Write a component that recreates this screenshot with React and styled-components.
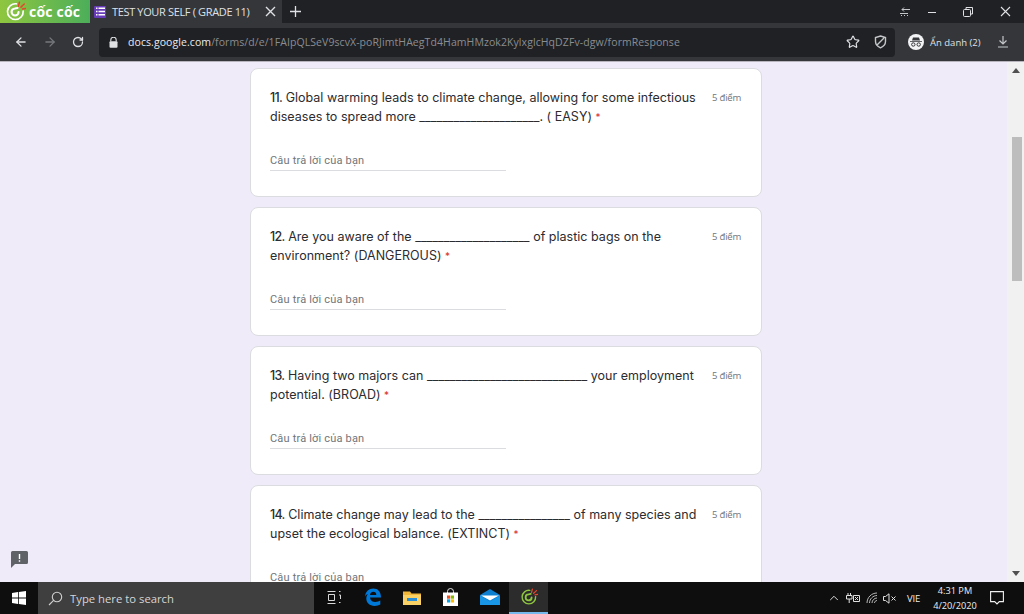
import React from 'react';
import styled, { createGlobalStyle } from 'styled-components';
import { ArrowLeft, ArrowRight, RotateCw, Star, ChevronUp } from 'lucide-react';

const GlobalStyle = createGlobalStyle`
  html, body { margin: 0; padding: 0; overflow: hidden; }
  * { box-sizing: border-box; }
`;

const questions = [
  { id: 11, before: 'Global warming leads to climate change, allowing for some infectious diseases to spread more ', blank: '_____________________', after: '. ( EASY)' },
  { id: 12, before: 'Are you aware of the ', blank: '____________________', after: ' of plastic bags on the environment? (DANGEROUS)' },
  { id: 13, before: 'Having two majors can ', blank: '____________________________', after: ' your employment potential. (BROAD)' },
  { id: 14, before: 'Climate change may lead to the ', blank: '________________', after: ' of many species and upset the ecological balance. (EXTINCT)' },
];

const CocLogo = ({ size = 20 }) => (
  <svg width={size} height={size} viewBox="0 0 24 24">
    <path d="M13 3.200A9 9 0 1 0 20.800 11.500" fill="none" stroke="currentColor" strokeWidth="1.900" strokeLinecap="round" />
    <path d="M15.500 12.500a4 4 0 1 1-4.200-4l3-.6" fill="none" stroke="currentColor" strokeWidth="2.400" strokeLinecap="round" />
    <path d="M16.500 1.500l-1.200 4.500M22 3.500l-3.800 3.500M23.500 8.500l-3.500.6" stroke="#e8452c" strokeWidth="1.700" strokeLinecap="round" />
  </svg>
);

const App = () => {
  return (
    <Screen>
      <GlobalStyle />
      <TabStrip>
        <Brand>
          <CocLogo size={21} />
          <BrandName>cốc cốc</BrandName>
        </Brand>
        <Tab>
          <FormsBadge>
            <svg width="9" height="9" viewBox="0 0 9 9" fill="#fff">
              <path d="M0 .5h1.500V2H0zM2.500.5H9V2H2.500zM0 3.700h1.500v1.500H0zM2.500 3.700H9v1.500H2.500zM0 7h1.500v1.500H0zM2.500 7H9v1.500H2.500z" />
            </svg>
          </FormsBadge>
          <TabTitle>TEST YOUR SELF ( GRADE 11)</TabTitle>
          <svg width="11" height="11" viewBox="0 0 11 11" stroke="#dfe1e5" strokeWidth="1.400">
            <path d="M1 1l9 9M10 1l-9 9" />
          </svg>
        </Tab>
        <NewTab>
          <svg width="11" height="11" viewBox="0 0 11 11" stroke="#dfe1e5" strokeWidth="1.300">
            <path d="M5.500 0v11M0 5.500h11" />
          </svg>
        </NewTab>
        <WindowControls>
          <WindowButton $width={18}>
            <svg width="10" height="9" viewBox="0 0 10 9" stroke="#c4c7c9" fill="none">
              <path d="M10 2.500H2M4 .5l-2 2 2 2M0 6.500h8M1 8.500h1M4 8.500h1M7 8.500h1" />
            </svg>
          </WindowButton>
          <WindowButton $width={36}>
            <svg width="10" height="10" viewBox="0 0 10 10" stroke="#dfe1e5">
              <path d="M1 5.500h8" />
            </svg>
          </WindowButton>
          <WindowButton $width={36}>
            <svg width="10" height="10" viewBox="0 0 10 10" stroke="#dfe1e5" fill="none">
              <rect x=".5" y="2.500" width="7" height="7" rx="1" />
              <path d="M3 2V.5h6.500V7H8" />
            </svg>
          </WindowButton>
          <WindowButton $width={38}>
            <svg width="11" height="11" viewBox="0 0 11 11" stroke="#dfe1e5" strokeWidth="1.100">
              <path d="M1 1l9 9M10 1l-9 9" />
            </svg>
          </WindowButton>
        </WindowControls>
      </TabStrip>

      <Toolbar>
        <NavGroup>
          <ArrowLeft size={14} color="#dfe1e5" strokeWidth={2.2} />
          <ArrowRight size={14} color="#75787c" strokeWidth={2.2} />
          <RotateCw size={12} color="#dfe1e5" strokeWidth={2.6} />
        </NavGroup>
        <AddressBar>
          <svg width="9" height="11" viewBox="0 0 9 11">
            <path d="M1.800 4.500V3a2.700 2.700 0 0 1 5.400 0v1.500" fill="none" stroke="#e0e1e3" strokeWidth="1.100" />
            <rect x="0.5" y="4.200" width="8" height="6.500" rx="1" fill="#e0e1e3" />
          </svg>
          <Url>
            docs.google.com<UrlPath>/forms/d/e/1FAIpQLSeV9scvX-poRJimtHAegTd4HamHMzok2KylxglcHqDZFv-dgw/formResponse</UrlPath>
          </Url>
          <AddressIcons>
            <Star size={14} color="#dfe1e5" strokeWidth={2} />
            <svg width="13" height="14" viewBox="0 0 13 14" fill="none" stroke="#c4c7c9" strokeWidth="1.400">
              <path d="M6.500 1l5 1.600v4c0 3-2.200 5-5 6.200-2.800-1.200-5-3.200-5-6.200v-4zM3 10l7-7" />
            </svg>
          </AddressIcons>
        </AddressBar>
        <Profile>
          <IncognitoBadge>
            <svg width="12" height="10" viewBox="0 0 12 10" fill="#35363a">
              <path d="M3 .5h6l1 3H2zM0 4h12v.8H0z" />
              <circle cx="3.300" cy="7.500" r="1.700" fill="none" stroke="#35363a" />
              <circle cx="8.700" cy="7.500" r="1.700" fill="none" stroke="#35363a" />
            </svg>
          </IncognitoBadge>
          <ProfileName>Ẩn danh (2)</ProfileName>
        </Profile>
        <Download>
          <svg width="10" height="12" viewBox="0 0 10 12" fill="none" stroke="#c4c7c9" strokeWidth="1.200">
            <path d="M5 0v8M1.500 4.500L5 8l3.500-3.500M0 11h10" />
          </svg>
        </Download>
      </Toolbar>

      <Viewport>
        <Page>
          {questions.map((q) => (
            <Card key={q.id}>
              <QuestionHead>
                <Title>
                  <Num>{q.id}.</Num> {q.before}{q.blank}{q.after} <Req>*</Req>
                </Title>
                <Points>5 điểm</Points>
              </QuestionHead>
              <Answer>Câu trả lời của bạn</Answer>
            </Card>
          ))}
        </Page>
        <Feedback>
          <svg width="17" height="17" viewBox="0 0 17 17">
            <path d="M1.500 0h14A1.500 1.500 0 0 1 17 1.500v10a1.500 1.500 0 0 1-1.500 1.500H4l-4 4V1.500A1.500 1.500 0 0 1 1.500 0z" fill="#5f6368" />
            <path d="M7.800 3h1.400v5H7.800zM7.800 9.300h1.400v1.400H7.800z" fill="#fff" />
          </svg>
        </Feedback>
        <ScrollBar>
          <ScrollArrow>
            <svg width="8" height="5" viewBox="0 0 8 5" fill="#505050"><path d="M4 0l4 5H0z" /></svg>
          </ScrollArrow>
          <ScrollThumb />
          <ScrollArrow $bottom>
            <svg width="8" height="5" viewBox="0 0 8 5" fill="#505050"><path d="M0 0h8L4 5z" /></svg>
          </ScrollArrow>
        </ScrollBar>
      </Viewport>

      <Taskbar>
        <StartButton>
          <svg width="14" height="14" viewBox="0 0 14 14" fill="#fff">
            <path d="M0 2l6-.9v5.500H0zM6.800 1L14 0v6.600H6.800zM0 7.400h6v5.500L0 12zM6.800 7.400H14V14l-7.200-1z" />
          </svg>
        </StartButton>
        <SearchBox>
          <svg width="15" height="15" viewBox="0 0 15 15" fill="none" stroke="#d0d0d0" strokeWidth="1.100">
            <circle cx="9" cy="6" r="4.700" />
            <path d="M5.600 9.400L1 14" />
          </svg>
          <SearchText>Type here to search</SearchText>
        </SearchBox>
        <TaskIcons>
          <TaskIcon>
            <svg width="14" height="13" viewBox="0 0 14 13" fill="none" stroke="#d8d8d8">
              <path d="M.5 .5h8M.5 12.500h8M1.500 3.500h6v6h-6zM12 .5h1.500M12 4h1.500v4M12 11.500h1.500" />
            </svg>
          </TaskIcon>
          <TaskIcon>
            <svg width="18" height="18" viewBox="0 0 18 18">
              <path d="M1 8.500C1.600 3.500 5 .6 9.300.6c4.700 0 7.700 3.400 7.700 8.900H6c.2 3 2.500 4.500 5.300 4.500 2 0 3.800-.6 5-1.400v4c-1.400.8-3.300 1.300-5.700 1.300-5 0-8.300-3.100-8.300-7.400 0-1.700.6-3.300 1.700-4.500C3 6.200 1.900 7.200 1 8.500zM6 7h6.300c0-2-1.100-3.200-3-3.200C7.600 3.800 6.400 5 6 7z" fill="#0078d7" />
            </svg>
          </TaskIcon>
          <TaskIcon>
            <svg width="18" height="15" viewBox="0 0 18 15">
              <path d="M0 1.500h7l1.500 2H18V15H0z" fill="#f0b73a" />
              <path d="M0 5h18v10H0z" fill="#fad165" />
              <path d="M4 8h10v3H4z" fill="#2b8fd8" />
            </svg>
          </TaskIcon>
          <TaskIcon>
            <svg width="15" height="18" viewBox="0 0 15 18">
              <path d="M4.500 5V3.500a3 3 0 0 1 6 0V5" fill="none" stroke="#e6e6e6" />
              <path d="M0 4.500h15V18H0z" fill="#fff" />
              <path d="M4 7.500h3.200v3.200H4z" fill="#f25022" />
              <path d="M7.800 7.500H11v3.200H7.800z" fill="#7fba00" />
              <path d="M4 11.300h3.200v3.200H4z" fill="#00a4ef" />
              <path d="M7.800 11.300H11v3.200H7.800z" fill="#ffb900" />
            </svg>
          </TaskIcon>
          <TaskIcon>
            <svg width="20" height="16" viewBox="0 0 20 16">
              <path d="M0 6l10-6 10 6v10H0z" fill="#0c7fd1" />
              <path d="M1 6.500h18L10 11.500z" fill="#fff" />
              <path d="M0 6.500l10 6 10-6V16H0z" fill="#1a96e6" />
            </svg>
          </TaskIcon>
          <TaskIcon $active>
            <CocTask>
              <CocLogo size={18} />
            </CocTask>
          </TaskIcon>
        </TaskIcons>
        <Tray>
          <ChevronUp size={14} color="#e6e6e6" strokeWidth={1.6} />
          <TrayGlyph $ml={5}>
            <svg width="14" height="11" viewBox="0 0 14 11" fill="none" stroke="#e0e0e0">
              <path d="M2 0v2M4.500 0v2M.5 2.500h5.500V6H.5zM3.200 6v4M7.500 2.500h6v6h-6zM9 4l3 3M12 4L9 7" />
            </svg>
          </TrayGlyph>
          <TrayGlyph $ml={6}>
            <svg width="13" height="12" viewBox="0 0 13 12" fill="none" stroke="#b8b8b8">
              <path d="M1 11C1 5.500 5.500 1 11 1M3.500 11c0-4 3.500-7.500 7.500-7.500M6 11c0-2.700 2.300-5 5-5M8.500 11c0-1.300 1.200-2.500 2.500-2.500" />
            </svg>
          </TrayGlyph>
          <TrayGlyph $ml={4}>
            <svg width="14" height="11" viewBox="0 0 14 11" fill="none" stroke="#e0e0e0">
              <path d="M.5 3.500h2L6 .8v9.400L2.500 7.500h-2zM8.500 3.500l4 4M12.500 3.500l-4 4" />
            </svg>
          </TrayGlyph>
          <Lang>VIE</Lang>
          <Clock>
            <span>4:31 PM</span>
            <span>4/20/2020</span>
          </Clock>
          <Notify>
            <svg width="14" height="14" viewBox="0 0 14 14" fill="none" stroke="#f0f0f0" strokeWidth="1.100">
              <path d="M.6 .6h12.800v10H9.300L7 13l-2.300-2.400H.6z" />
            </svg>
          </Notify>
        </Tray>
      </Taskbar>
    </Screen>
  );
};

const Screen = styled.div`
  width: 1024px;
  height: 614px;
  display: flex;
  flex-direction: column;
  overflow: hidden;
  font-family: 'Open Sans', 'Liberation Sans', sans-serif;
`;

const TabStrip = styled.div`
  height: 23px;
  flex: none;
  display: flex;
  align-items: stretch;
  background: #202124;
`;

const Brand = styled.div`
  width: 90px;
  display: flex;
  align-items: center;
  gap: 3px;
  padding-left: 5px;
  color: #fff;
  background: linear-gradient(90deg, #8fc63f, #4cae5a);
`;

const BrandName = styled.span`
  font: bold 14px 'Open Sans', sans-serif;
  letter-spacing: 0.2px;
  white-space: nowrap;
`;

const Tab = styled.div`
  width: 192px;
  display: flex;
  align-items: center;
  padding: 0 6px 0 4px;
  background: #35363a;
`;

const FormsBadge = styled.div`
  width: 12px;
  height: 12px;
  display: flex;
  align-items: center;
  justify-content: center;
  background: #673ab7;
  border-radius: 1px;
`;

const TabTitle = styled.span`
  flex: 1;
  margin-left: 6px;
  font: 11px 'Open Sans', sans-serif;
  letter-spacing: -0.35px;
  color: #dfe1e5;
  white-space: nowrap;
`;

const NewTab = styled.div`
  width: 26px;
  display: flex;
  align-items: center;
  justify-content: center;
`;

const WindowControls = styled.div`
  margin-left: auto;
  display: flex;
`;

const WindowButton = styled.div`
  width: ${(p) => p.$width}px;
  display: flex;
  align-items: center;
  justify-content: center;
`;

const Toolbar = styled.div`
  height: 38px;
  flex: none;
  display: flex;
  align-items: center;
  background: #35363a;
`;

const NavGroup = styled.div`
  width: 99px;
  display: flex;
  align-items: center;
  gap: 15px;
  padding-left: 14px;
`;

const AddressBar = styled.div`
  width: 796px;
  height: 29px;
  display: flex;
  align-items: center;
  padding: 0 8px 0 10px;
  background: #202124;
  border-radius: 4px;
`;

const Url = styled.div`
  margin-left: 10px;
  font: 10.5px 'Open Sans', sans-serif;
  letter-spacing: 0.08px;
  color: #e8eaed;
  white-space: nowrap;
`;

const UrlPath = styled.span`
  color: #8a8d91;
`;

const AddressIcons = styled.div`
  margin-left: auto;
  display: flex;
  align-items: center;
  gap: 14px;
`;

const Profile = styled.div`
  display: flex;
  align-items: center;
  margin-left: 13px;
`;

const IncognitoBadge = styled.div`
  width: 16px;
  height: 16px;
  display: flex;
  align-items: center;
  justify-content: center;
  background: #f1f3f4;
  border-radius: 50%;
`;

const ProfileName = styled.span`
  margin-left: 6px;
  font: 9.5px 'Open Sans', sans-serif;
  color: #dfe1e5;
  white-space: nowrap;
`;

const Download = styled.div`
  margin-left: 17px;
  display: flex;
`;

const Viewport = styled.main`
  position: relative;
  flex: 1;
  min-height: 0;
  display: flex;
  overflow: hidden;
  background: #f0ebf8;
  border-top: 1px solid #b8b5bf;
`;

const Page = styled.div`
  flex: 1;
  min-width: 0;
  height: 100%;
  overflow: hidden;
  padding: 6px 245px 0 250px;
  display: flex;
  flex-direction: column;
  gap: 10px;
`;

const Card = styled.section`
  flex: none;
  height: 129px;
  padding: 19px 19px 0;
  background: #fff;
  border: 1px solid #dadce0;
  border-radius: 8px;
`;

const QuestionHead = styled.div`
  display: flex;
  justify-content: space-between;
`;

const Title = styled.div`
  width: 432px;
  font: 12.5px/19px Inter, 'Open Sans', sans-serif;
  letter-spacing: 0.02px;
  color: #2b2c30;
`;

const Num = styled.span`
  font-weight: 500;
  letter-spacing: -0.7px;
`;

const Req = styled.span`
  font-size: 10px;
  color: #d93025;
`;

const Points = styled.span`
  width: 30px;
  margin-top: 2px;
  font: 9.5px/16px 'Open Sans', sans-serif;
  letter-spacing: -0.2px;
  color: #70757a;
  white-space: nowrap;
`;

const Answer = styled.div`
  width: 236px;
  height: 20px;
  margin-top: 24px;
  font: 11px/20px Roboto, sans-serif;
  letter-spacing: 0.18px;
  color: #70757a;
  border-bottom: 1px solid #dadce0;
`;

const Feedback = styled.div`
  position: absolute;
  left: 11px;
  bottom: 14px;
  display: flex;
`;

const ScrollBar = styled.div`
  flex: none;
  width: 17px;
  display: flex;
  flex-direction: column;
  background: #f1f1f1;
`;

const ScrollArrow = styled.div`
  height: 17px;
  display: flex;
  align-items: center;
  justify-content: center;
  margin-top: ${(p) => (p.$bottom ? 'auto' : '0')};
`;

const ScrollThumb = styled.div`
  width: 10px;
  height: 144px;
  margin: 58px 0 0 5px;
  background: #bdbdbd;
`;

const Taskbar = styled.footer`
  height: 32px;
  flex: none;
  display: flex;
  align-items: stretch;
  background: #0e0e0e;
`;

const StartButton = styled.div`
  width: 38px;
  display: flex;
  align-items: center;
  justify-content: center;
`;

const SearchBox = styled.div`
  width: 276px;
  display: flex;
  align-items: center;
  padding-left: 10px;
  background: #3f3f3f;
`;

const SearchText = styled.span`
  margin-left: 7px;
  font: 11.3px 'Open Sans', sans-serif;
  color: #d6d6d6;
`;

const TaskIcons = styled.div`
  display: flex;
`;

const TaskIcon = styled.div`
  width: 39px;
  display: flex;
  align-items: center;
  justify-content: center;
  background: ${(p) => (p.$active ? '#2c2c2c' : 'transparent')};
  border-bottom: 2px solid ${(p) => (p.$active ? '#76b9ed' : 'transparent')};
`;

const CocTask = styled.div`
  display: flex;
  color: #8fc63f;
`;

const Tray = styled.div`
  margin-left: auto;
  display: flex;
  align-items: center;
`;

const TrayGlyph = styled.div`
  display: flex;
  margin-left: ${(p) => p.$ml}px;
`;

const Lang = styled.span`
  width: 16px;
  margin-left: 10px;
  font: 9.5px 'Open Sans', sans-serif;
  letter-spacing: -0.2px;
  color: #eee;
  white-space: nowrap;
`;

const Clock = styled.div`
  width: 46px;
  margin-left: 9px;
  display: flex;
  flex-direction: column;
  align-items: center;
  gap: 1px;
  font: 9.2px/14px 'Open Sans', sans-serif;
  color: #eee;
  white-space: nowrap;
`;

const Notify = styled.div`
  width: 46px;
  padding-right: 8px;
  display: flex;
  justify-content: center;
`;

export default App;
